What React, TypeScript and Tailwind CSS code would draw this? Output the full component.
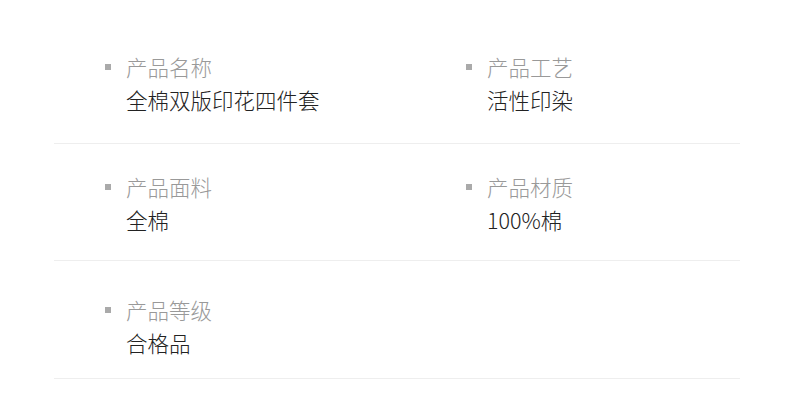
const ROWS: { pad: string; items: { label: string; value: string }[] }[] = [
  {
    pad: "pt-[26px] pb-[27px]",
    items: [
      { label: "产品名称", value: "全棉双版印花四件套" },
      { label: "产品工艺", value: "活性印染" },
    ],
  },
  {
    pad: "pt-[26px] pb-[24px]",
    items: [
      { label: "产品面料", value: "全棉" },
      { label: "产品材质", value: "100%棉" },
    ],
  },
  {
    pad: "pt-[32px] pb-[19px]",
    items: [{ label: "产品等级", value: "合格品" }],
  },
];

function Item({ label, value }: { label: string; value: string }) {
  return (
    <div className="flex flex-col">
      <div className="flex items-center">
        <span className="mr-[15px] h-[6px] w-[6px] bg-[#aaaaaa]" />
        <span className="text-[#999999]">{label}</span>
      </div>
      <div className="pl-[21px] text-[#222222]">{value}</div>
    </div>
  );
}

export default function App() {
  return (
    <div
      className="min-h-[403px] w-[790px] bg-white pl-[54px] pr-[50px] pt-[24px] text-[21.5px] font-light leading-[33px]"
      style={{ fontFamily: '"Noto Sans CJK SC", "Noto Sans", sans-serif' }}
    >
      {ROWS.map((row, i) => (
        <div
          key={i}
          className={`grid grid-cols-[361px_1fr] border-b border-[#eeeeee] pl-[51px] ${row.pad}`}
        >
          {row.items.map((item) => (
            <Item key={item.label} {...item} />
          ))}
        </div>
      ))}
    </div>
  );
}
